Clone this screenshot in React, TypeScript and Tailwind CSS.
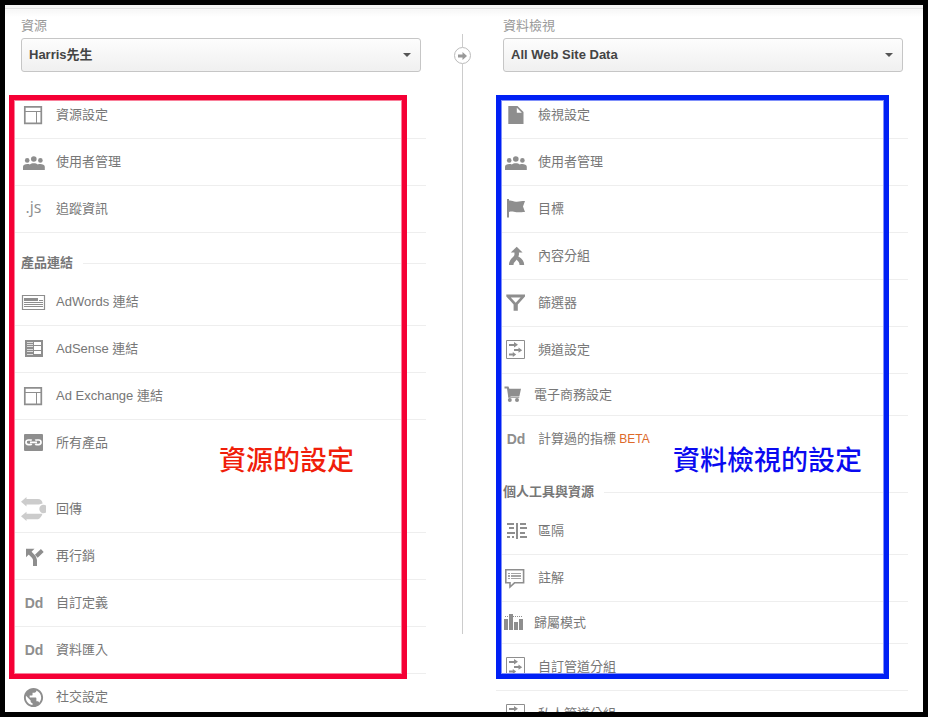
import React from 'react';
import { MdPublic } from 'react-icons/md';

type MenuEntry =
  | { kind: 'item'; label: string; icon: React.ReactNode; compact?: boolean; beta?: boolean }
  | { kind: 'last'; label: string; icon: React.ReactNode; beta?: boolean }
  | { kind: 'heading'; label: string }
  | { kind: 'space' };

const Icon: React.FC<{ children: React.ReactNode }> = ({ children }) => (
  <svg width="25" height="24" viewBox="0 0 25 24" fill="#8e8e8e" aria-hidden="true">
    {children}
  </svg>
);

const SmallIcon: React.FC<{ children: React.ReactNode }> = ({ children }) => (
  <svg width="21" height="23" viewBox="0 0 21 23" fill="#8e8e8e" aria-hidden="true">
    {children}
  </svg>
);

const PanelIcon = () => (
  <Icon>
    <path d="M3.8 3.8h16.5v16.5H3.8z" fill="none" stroke="#8e8e8e" strokeWidth="1.7" />
    <path d="M4 8.5h16.5M15.5 8.5v12" fill="none" stroke="#8e8e8e" strokeWidth="1" />
  </Icon>
);

const PeopleIcon = () => (
  <Icon>
    <circle cx="12.8" cy="9" r="2.8" />
    <circle cx="6.2" cy="10.4" r="2.3" />
    <circle cx="19.4" cy="10.4" r="2.3" />
    <path d="M2 20v-3.2c0-1.8 2-2.8 4.4-2.8.9 0 1.7.1 2.4.4 1-.7 2.4-1.1 4-1.1s3 .4 4 1.1c.7-.3 1.5-.4 2.4-.4 2.4 0 4.6 1 4.6 2.8V20z" />
  </Icon>
);

const JsIcon = () => (
  <span className="pb-1 font-['Open_Sans',sans-serif] text-base leading-4 text-[#8e8e8e]">.js</span>
);

const DdIcon = () => <span className="pl-px text-sm leading-4 font-bold text-[#8e8e8e]">Dd</span>;

const AdWordsIcon = () => (
  <Icon>
    <path d="M1.5 5.5h22v14h-22z" fill="none" stroke="#8e8e8e" strokeWidth="1.2" />
    <path d="M3 8h14v3H3zM18 10h4v1h-4zM3 12h19v1H3zM3 14h19v1H3zM3 16h19v1H3z" />
  </Icon>
);

const AdSenseIcon = () => (
  <Icon>
    <path d="M4 3h18v17H4z" />
    <path d="M13 5h7v3h-7zM13 9h7v4h-7zM13 14h7v3h-7z" fill="#fff" />
    <path d="M6 5h6v1H6zM6 7h6v1H6zM6 9h6v1H6zM6 12h6v1H6zM6 14h6v1H6zM6 17h6v1H6z" fill="#ddd" />
  </Icon>
);

const LinkIcon = () => (
  <Icon>
    <rect x="3" y="3" width="19" height="17" rx="1" />
    <g fill="none" stroke="#fff" strokeWidth="1.7">
      <path d="M10.8 9.3C10.400 9 9.800 9 9.200 9H7.300a2.300 2.300 0 0 0 0 4.600h1.900c.6 0 1.200 0 1.600-.4M14.200 9.300c.4-.3 1-.3 1.600-.3h1.900a2.300 2.300 0 0 1 0 4.600h-1.900c-.6 0-1.200 0-1.600-.4M9 11.300h7" />
    </g>
  </Icon>
);

const PostbackIcon = () => (
  <Icon>
    <g fill="#ccc">
      <path d="M0 4.7 5.5 0v2H17c2.500 0 4.500 1.800 4.600 4.600L18 7.500H5.500v2zM0 19.300l5.500-4.600v2h16c-.8 2.600-2.200 4.500-4.500 5.600H5.500V24z" />
      <circle cx="22.5" cy="12" r="4.2" />
    </g>
  </Icon>
);

const SplitIcon = () => (
  <Icon>
    <path d="M5 4.8h8.5L5 13.3z" />
    <path d="M8 8l4.3 4.3c1.3 1.3 1.7 2.2 1.7 3.7v6M15.3 12.2l6-5.7" fill="none" stroke="#8e8e8e" strokeWidth="4" />
  </Icon>
);

const PageIcon = () => (
  <Icon>
    <path d="M5.3 3h9.2l6 6v12H5.3z" />
    <path d="M13.8 4.8v5h5z" fill="#fff" />
  </Icon>
);

const FlagIcon = () => (
  <Icon>
    <path d="M4 2h2v18.5H4z" />
    <path d="M6 3.5c2.5-.5 4 1 7 1.2 3 .2 5.5-.7 9-.7l-2 5.5 2 5.5c-3.5 0-5.5.6-8.5.2-3-.3-4.5-1.2-7.5-.2z" />
  </Icon>
);

const MergeIcon = () => (
  <Icon>
    <path d="M13.7 2.7l5.900 5.800H7.800z" />
    <path d="M13.7 7v3.5c0 2-.6 2.8-2.2 4.2-2 1.7-3.300 3-3.300 6.300" fill="none" stroke="#8e8e8e" strokeWidth="4.5" />
    <path d="M15.5 12.500c3.800 2.300 5.700 4.800 5.700 8.500h-4.700c0-2.200-.8-3.600-3-5.300z" />
  </Icon>
);

const FilterIcon = () => (
  <Icon>
    <path d="M3.3 3.5H22v2l-7.2 8v6.2h-4.200v-6.200L3.300 5.500z" />
    <path d="M7.8 6.500h9.800l-4.900 5.200z" fill="#fff" />
  </Icon>
);

const ChannelIcon = () => (
  <Icon>
    <path d="M3.5 2.5h18v18h-18z" fill="none" stroke="#8e8e8e" />
    <path d="M6 6h5V4l4 2.800-4 2.800V8H6zM11 11h4.500V9.600l3.700 2.600-3.700 2.600V13H11zM6 15.400h3.800v-1.500l3.400 2.500-3.400 2.500v-1.500H6z" />
  </Icon>
);

const CartIcon = () => (
  <SmallIcon>
    <path d="M1.5 3.500h4l.8 2.200H18l-1.600 7.500H7.500v.5h8.800v1H5.200L5 12.200 4 5.600H1.500z" />
    <circle cx="6.8" cy="17" r="2" />
    <circle cx="14" cy="17" r="2" />
  </SmallIcon>
);

const SegmentIcon = () => (
  <Icon>
    <path d="M13 4h2v16h-2zM4 4h7v2H4zM6 8h5v2H6zM4 13h8v2H4zM4 17h3v2H4zM9 17h2v2H9zM17 4h6v2h-6zM17 8h7v2h-7zM17 13h5v2h-5zM17 17h7v2h-7z" />
  </Icon>
);

const NoteIcon = () => (
  <Icon>
    <path d="M2.8 3.800h17.800v13H11.500L7 21v-4.200H2.800z" fill="none" stroke="#8e8e8e" strokeWidth="1.6" />
    <path d="M5 7h2v1H5zM8 7h10v1H8zM5 9h2v2H5zM8 9h10v2H8zM5 12h2v1H5zM8 12h10v1H8z" fill="#a4a4a4" />
  </Icon>
);

const AttributionIcon = () => (
  <SmallIcon>
    <path d="M1 8h4v11H1zM6 3h4v16H6zM11 11h4v8h-4zM16 8h4v11h-4z" />
    <path d="M2 5.500h18" fill="none" stroke="#8e8e8e" strokeDasharray="1 1" />
  </SmallIcon>
);

const propertyMenu: MenuEntry[] = [
  { kind: 'item', label: '資源設定', icon: <PanelIcon /> },
  { kind: 'item', label: '使用者管理', icon: <PeopleIcon /> },
  { kind: 'item', label: '追蹤資訊', icon: <JsIcon /> },
  { kind: 'heading', label: '產品連結' },
  { kind: 'item', label: 'AdWords 連結', icon: <AdWordsIcon /> },
  { kind: 'item', label: 'AdSense 連結', icon: <AdSenseIcon /> },
  { kind: 'item', label: 'Ad Exchange 連結', icon: <PanelIcon /> },
  { kind: 'last', label: '所有產品', icon: <LinkIcon /> },
  { kind: 'space' },
  { kind: 'item', label: '回傳', icon: <PostbackIcon /> },
  { kind: 'item', label: '再行銷', icon: <SplitIcon /> },
  { kind: 'item', label: '自訂定義', icon: <DdIcon /> },
  { kind: 'item', label: '資料匯入', icon: <DdIcon /> },
  { kind: 'item', label: '社交設定', icon: <MdPublic size={23} color="#8e8e8e" /> },
];

const viewMenu: MenuEntry[] = [
  { kind: 'item', label: '檢視設定', icon: <PageIcon /> },
  { kind: 'item', label: '使用者管理', icon: <PeopleIcon /> },
  { kind: 'item', label: '目標', icon: <FlagIcon /> },
  { kind: 'item', label: '內容分組', icon: <MergeIcon /> },
  { kind: 'item', label: '篩選器', icon: <FilterIcon /> },
  { kind: 'item', label: '頻道設定', icon: <ChannelIcon /> },
  { kind: 'item', label: '電子商務設定', icon: <CartIcon />, compact: true },
  { kind: 'last', label: '計算過的指標', icon: <DdIcon />, beta: true },
  { kind: 'heading', label: '個人工具與資源' },
  { kind: 'item', label: '區隔', icon: <SegmentIcon /> },
  { kind: 'item', label: '註解', icon: <NoteIcon /> },
  { kind: 'item', label: '歸屬模式', icon: <AttributionIcon />, compact: true },
  { kind: 'item', label: '自訂管道分組', icon: <ChannelIcon /> },
  { kind: 'item', label: '私人管道分組', icon: <ChannelIcon /> },
];

const MenuRow: React.FC<{ entry: MenuEntry }> = ({ entry }) => {
  if (entry.kind === 'space') {
    return <li className="h-5" aria-hidden="true" />;
  }

  if (entry.kind === 'heading') {
    return (
      <li className="flex h-[46px] items-center gap-[10px] pt-[14px] pl-[7px]">
        <h2 className="leading-4 font-bold">{entry.label}</h2>
        <span className="h-px flex-1 bg-[#eee]" />
      </li>
    );
  }

  const compact = entry.kind === 'item' && entry.compact;
  const border = entry.kind === 'item' ? 'border-b border-[#eee]' : '';

  return (
    <li className={`${compact ? 'h-[42px]' : entry.kind === 'last' ? 'h-[46px]' : 'h-[47px]'} ${border}`}>
      <a href="#" className="flex h-full items-center gap-[10px] pl-[7px]">
        <span className={`flex shrink-0 justify-center ${compact ? 'w-[21px]' : 'w-[25px]'}`}>{entry.icon}</span>
        <span className="leading-4">
          {entry.label}
          {entry.beta && <span className="text-xs leading-4 text-[#dd6a2a]"> BETA</span>}
        </span>
      </a>
    </li>
  );
};

interface ColumnProps {
  id: string;
  title: string;
  value: string;
  menu: MenuEntry[];
  children: React.ReactNode;
}

const Column: React.FC<ColumnProps> = ({ id, title, value, menu, children }) => (
  <section className="min-w-0 pt-[9px]">
    <div className="pr-[5px] pl-[7px]">
      <label htmlFor={id} className="block leading-4 text-[#999]">{title}</label>
      <div className="relative mt-1">
        <select
          id={id}
          className="block h-[34px] w-full appearance-none rounded-[3px] border border-[#c6c6c6] bg-linear-to-b from-[#fdfdfd] to-[#f0f0f0] pr-6 pl-[7px] font-bold text-[#444]"
        >
          <option>{value}</option>
        </select>
        <svg className="pointer-events-none absolute top-[15px] right-[10px]" width="8" height="4" viewBox="0 0 8 4" fill="#555">
          <path d="M0 0h8L4 4z" />
        </svg>
      </div>
    </div>
    <div className="relative mt-5">
      <ul>
        {menu.map((entry, index) => (
          <MenuRow key={index} entry={entry} />
        ))}
      </ul>
      {children}
    </div>
  </section>
);

const App: React.FC = () => (
  <div className="h-screen overflow-hidden border-5 border-black bg-white font-['Liberation_Sans','Noto_Sans_CJK_TC',sans-serif] text-[13px] text-[#777]">
    <div className="h-1 border-b border-[#e2e2e2] bg-[#f3f3f3]" />
    <main className="grid grid-cols-[1fr_70px_1fr] bg-linear-to-b from-[#f6f6f6] to-white to-[8px] pr-[15px] pl-[9px]">
      <Column id="property" title="資源" value="Harris先生" menu={propertyMenu}>
        <div className="pointer-events-none absolute top-[3px] right-[19px] -left-[5px] h-[584px] border-5 border-[#f50035] shadow-[inset_0_0_0_1px_#f9809a]" />
        <p className="absolute top-[353px] left-[205px] text-[27px] leading-8 font-medium whitespace-nowrap text-[#f01e0a]">資源的設定</p>
      </Column>

      <div className="flex flex-col items-center pt-[25px] pl-[3px]">
        <span className="h-[13px] w-px bg-[#ccc]" />
        <span className="flex size-[17px] items-center justify-center rounded-full border border-[#bbb] bg-white">
          <svg width="9" height="8" viewBox="0 0 9 8" fill="#999" className="shrink-0">
            <path d="M0 2.5h4.500V0L9 4 4.500 8V5.500H0z" />
          </svg>
        </span>
        <span className="h-[570px] w-px bg-[#ccc]" />
      </div>

      <Column id="view" title="資料檢視" value="All Web Site Data" menu={viewMenu}>
        <div className="pointer-events-none absolute top-[3px] right-[19px] left-0 h-[584px] border-5 border-[#0020f5] shadow-[inset_0_0_0_1px_#8090fa]" />
        <p className="absolute top-[353px] left-[177px] text-[27px] leading-8 font-medium whitespace-nowrap text-[#0a0af0]">資料檢視的設定</p>
      </Column>
    </main>
  </div>
);

export default App;
